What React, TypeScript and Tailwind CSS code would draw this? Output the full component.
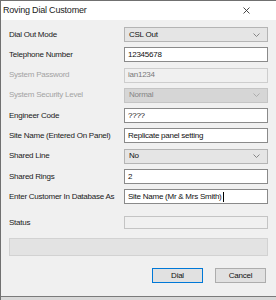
import { ReactNode } from 'react'

function Chevron({ color = '#7a7a7a' }: { color?: string }) {
  return (
    <svg width="7" height="4" viewBox="0 0 7 4" className="shrink-0">
      <path d="M0.5 0.5 L3.5 3.5 L6.5 0.5" fill="none" stroke={color} strokeWidth="0.9" />
    </svg>
  )
}

function Combo({ value, disabled }: { value: string; disabled?: boolean }) {
  return (
    <div
      className={
        disabled
          ? 'h-[15px] flex items-center justify-between pl-[4px] pr-[7px] bg-[#d6d6d6] border border-[#c4c4c4] text-[#858585]'
          : 'h-[15px] flex items-center justify-between pl-[4px] pr-[7px] bg-[#e5e5e5] border border-[#b4b4b4] text-[#111]'
      }
    >
      <span>{value}</span>
      <Chevron color={disabled ? '#a8a8a8' : '#7a7a7a'} />
    </div>
  )
}

function TextBox({ value, disabled, caret }: { value: string; disabled?: boolean; caret?: boolean }) {
  return (
    <div
      className={
        disabled
          ? 'h-[15px] flex items-center pl-[3px] bg-[#f0f0f0] border border-[#cdcdcd] text-[#7a7a7a]'
          : 'h-[15px] flex items-center pl-[3px] bg-white border border-[#8a8a8a] text-[#111]'
      }
    >
      <span>{value}</span>
      {caret && <span className="w-px h-[10px] bg-black ml-[1px]" />}
    </div>
  )
}

function Row({ label, disabled, children }: { label: string; disabled?: boolean; children: ReactNode }) {
  return (
    <>
      <div className={disabled ? 'flex items-center text-[#a3a3a3]' : 'flex items-center text-[#1a1a1a]'}>{label}</div>
      {children}
    </>
  )
}

export default function App() {
  return (
    <div className="w-[276px] h-[300px] overflow-hidden flex flex-col bg-[#f0f0f0] border-t border-l border-[#707070] font-['Liberation_Sans',Arial,sans-serif] text-[8px] tracking-[-0.25px] leading-none">
      {/* title bar */}
      <div className="h-[19px] shrink-0 bg-white flex items-center justify-between pl-[2px] pr-[26px]">
        <span className="text-[9px] tracking-[-0.2px] text-[#1a1a1a]">Roving Dial Customer</span>
        <svg width="7" height="7" viewBox="0 0 7 7">
          <path d="M0.5 0.5 L6.5 6.5 M6.5 0.5 L0.5 6.5" stroke="#333" strokeWidth="0.9" />
        </svg>
      </div>

      <main className="flex-1 flex flex-col px-[8px] pt-[7px]">
        <div className="grid grid-cols-[115px_1fr] gap-y-[5.3px]">
          <Row label="Dial Out Mode">
            <Combo value="CSL Out" />
          </Row>
          <Row label="Telephone Number">
            <TextBox value="12345678" />
          </Row>
          <Row label="System Password" disabled>
            <TextBox value="ian1234" disabled />
          </Row>
          <Row label="System Security Level" disabled>
            <Combo value="Normal" disabled />
          </Row>
          <Row label="Engineer Code">
            <TextBox value="????" />
          </Row>
          <Row label="Site Name (Entered On Panel)">
            <TextBox value="Replicate panel setting" />
          </Row>
          <Row label="Shared Line">
            <Combo value="No" />
          </Row>
          <Row label="Shared Rings">
            <TextBox value="2" />
          </Row>
          <Row label="Enter Customer In Database As">
            <TextBox value="Site Name (Mr & Mrs Smith)" caret />
          </Row>
        </div>

        <div className="grid grid-cols-[115px_1fr] mt-[12px]">
          <div className="flex items-center text-[#1a1a1a]">Status</div>
          <div className="h-[13px] bg-[#f0f0f0] border border-[#c4c4c4]" />
        </div>

        <div className="mt-[9px] h-[18px] bg-[#e3e3e3] border border-[#d2d2d2]" />

        <div className="mt-[12px] flex justify-end gap-[12px] pr-[2px]">
          <button className="w-[51px] h-[15px] flex items-center justify-center bg-[#e1e1e1] border border-[#0078d7] text-[#111]">
            Dial
          </button>
          <button className="w-[51px] h-[15px] flex items-center justify-center bg-[#e1e1e1] border border-[#adadad] text-[#111]">
            Cancel
          </button>
        </div>
      </main>

      <div className="h-[4px] shrink-0 border-t border-[#7a7a7a] bg-[#d8d8d8]" />
    </div>
  )
}
